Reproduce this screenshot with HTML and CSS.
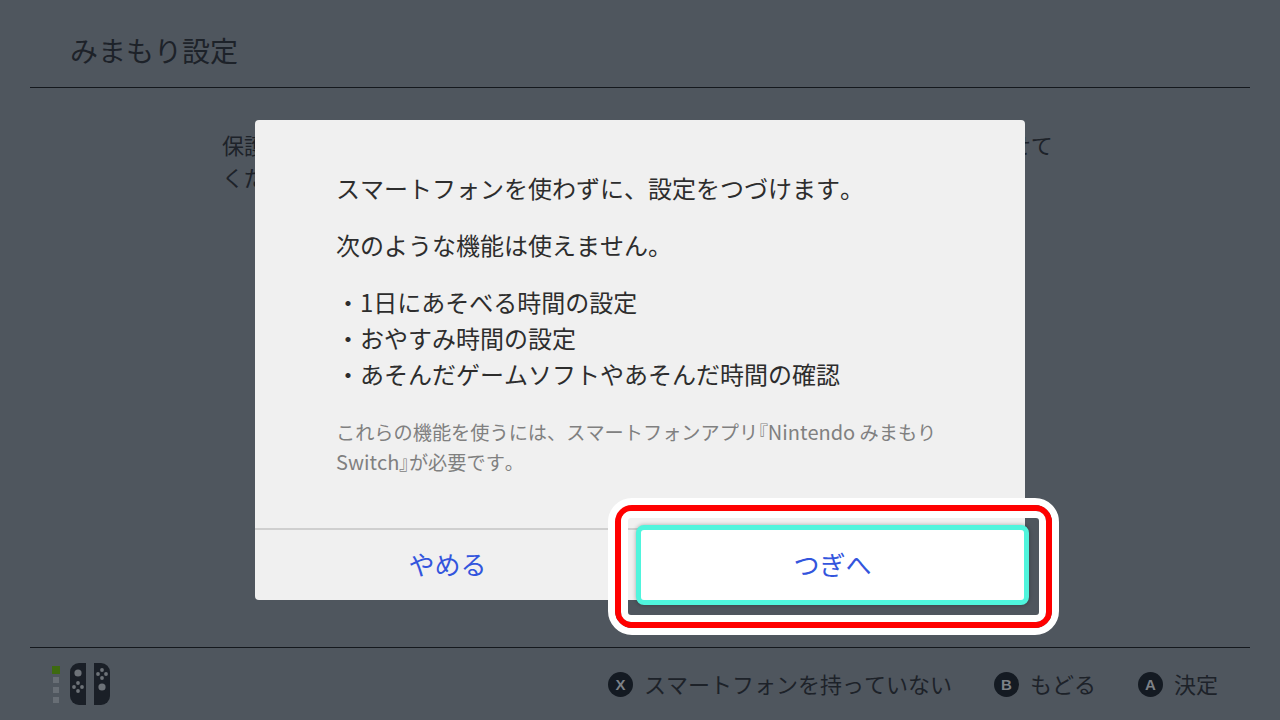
FILE: index.html
```html
<!DOCTYPE html>
<html lang="ja">
<head>
<meta charset="utf-8">
<title>みまもり設定</title>
<link rel="stylesheet" href="styles.css">
</head>
<body>
<div class="screen">
  <header class="header"><h1 class="title">みまもり設定</h1></header>
  <main class="main">
    <p class="intro">保護者の方のスマートフォンに、Nintendo Switchを入れて、この本体と連携させて<br>ください。</p>
  </main>
  <footer class="footer">
    <div class="controller">
      <div class="leds"><span class="led led-on"></span><span class="led"></span><span class="led"></span><span class="led"></span></div>
      <svg class="joycons" width="40" height="42" viewBox="0 0 40 42">
        <path class="jc" d="M16 0V42H9A9 9 0 0 1 0 33V9A9 9 0 0 1 9 0Z"/>
        <path class="jc" d="M24 0H31A9 9 0 0 1 40 9V33A9 9 0 0 1 31 42H24Z"/>
        <circle class="jb" cx="8" cy="10" r="3.6"/>
        <circle class="jb" cx="8" cy="20" r="1.9"/><circle class="jb" cx="8" cy="28" r="1.9"/><circle class="jb" cx="4" cy="24" r="1.9"/><circle class="jb" cx="12" cy="24" r="1.9"/>
        <circle class="jb" cx="32" cy="7" r="1.9"/><circle class="jb" cx="32" cy="15" r="1.9"/><circle class="jb" cx="28" cy="11" r="1.9"/><circle class="jb" cx="36" cy="11" r="1.9"/>
        <circle class="jb" cx="32" cy="24" r="3.6"/>
      </svg>
    </div>
    <div class="hints">
      <div class="hint"><span class="key">X</span><span>スマートフォンを持っていない</span></div>
      <div class="hint"><span class="key">B</span><span>もどる</span></div>
      <div class="hint"><span class="key">A</span><span>決定</span></div>
    </div>
  </footer>

  <section class="dialog">
    <div class="dialog-body">
      <p class="line">スマートフォンを使わずに、設定をつづけます。</p>
      <p class="line">次のような機能は使えません。</p>
      <ul class="list">
        <li>・1日にあそべる時間の設定</li>
        <li>・おやすみ時間の設定</li>
        <li>・あそんだゲームソフトやあそんだ時間の確認</li>
      </ul>
      <p class="note">これらの機能を使うには、スマートフォンアプリ<span class="bracket">『</span><span class="latin">Nintendo</span> みまもり<br><span class="latin">Switch</span><span class="bracket">』</span>が必要です。</p>
    </div>
    <div class="dialog-actions">
      <div class="action">やめる</div>
      <div class="action action-focus"><div class="focus-btn">つぎへ</div></div>
    </div>
  </section>

  <div class="ring"><div class="ring-red"><div class="ring-inner"></div></div></div>
</div>
</body>
</html>
```
FILE: styles.css
```css
* { box-sizing: border-box; margin: 0; padding: 0; }
html, body { width: 1280px; height: 720px; overflow: hidden; }
body { font-family: "Noto Sans CJK JP", "Noto Sans", sans-serif; background: #4f565e; color: #1d2229; font-kerning: none; }
.screen { position: relative; width: 1280px; height: 720px; display: flex; flex-direction: column; padding: 0 30px; }
.header { height: 88px; border-bottom: 1px solid #14181d; padding: 12px 40px 0; display: flex; align-items: center; }
.title { font-size: 28px; font-weight: 400; line-height: 40px; }
.main { flex: 1; padding: 40px 0 0 192px; }
.intro { font-size: 22px; line-height: 32px; white-space: nowrap; }
.footer { height: 73px; border-top: 1px solid #14181d; display: flex; align-items: center; justify-content: space-between; padding: 0 32px 0 22px; }
.controller { display: flex; align-items: center; gap: 10px; }
.leds { display: flex; flex-direction: column; align-items: center; gap: 4px; width: 8px; flex: none; }
.led { display: block; flex: none; width: 6px; height: 6px; background: #686e75; }
.led-on { width: 8px; height: 8px; background: #3e6a10; margin-bottom: -1px; }
.jc { fill: #1a1f27; }
.jb { fill: #6d7278; }
.hints { display: flex; align-items: center; gap: 42px; font-size: 22px; line-height: 32px; padding-bottom: 2px; }
.hint { display: flex; align-items: center; gap: 11px; }
.key { flex: none; width: 25px; height: 25px; border-radius: 50%; background: #141a22; color: #7c8187; font-size: 15px; font-weight: 700; line-height: 25px; text-align: center; font-family: "Liberation Sans", sans-serif; margin-top: 3px; }
.dialog { position: absolute; left: 255px; top: 120px; width: 770px; height: 480px; background: #f0f0f0; border-radius: 4px; display: flex; flex-direction: column; }
.dialog-body { flex: 1; padding: 50px 81px 0; color: #2d2d2d; font-size: 24px; line-height: 36px; }
.line { margin-bottom: 21px; }
.list { list-style: none; margin-bottom: 25px; }
.note { font-size: 19.2px; line-height: 29px; color: #808080; white-space: nowrap; }
.bracket { font-feature-settings: "palt"; }
.latin { font-size: 20px; }
.dialog-actions { height: 72px; border-top: 2px solid #cfcfcf; display: flex; }
.action { flex: 1; display: flex; align-items: center; justify-content: center; color: #3355dd; font-size: 26px; padding-bottom: 4px; }
.action-focus { position: relative; padding-bottom: 0; }
.focus-btn { position: absolute; inset: -5px -4px -5px -4px; display: flex; align-items: center; justify-content: center; padding-bottom: 3px; background: #fff; border: 5px solid #4ff5dd; border-radius: 8px; box-shadow: 0 0 4px rgba(0,0,0,.3); }
.ring { position: absolute; left: 608px; top: 498px; width: 451px; height: 137px; border: 7px solid #fff; border-radius: 24px; }
.ring-red { width: 100%; height: 100%; border: 6px solid #f00; border-radius: 17px; }
.ring-inner { width: 100%; height: 100%; border: 7px solid #fff; border-radius: 10px; }
```
